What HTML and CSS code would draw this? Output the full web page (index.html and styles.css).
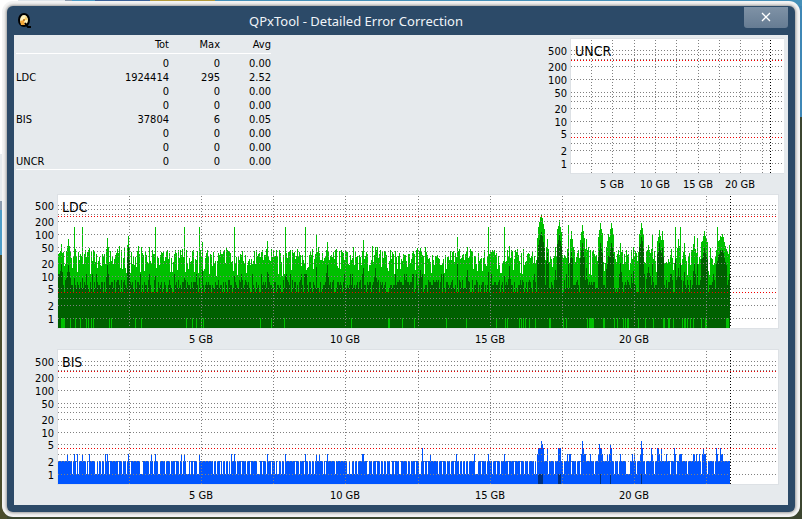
FILE: index.html
```html
<!DOCTYPE html>
<html lang="en">
<head>
    <meta charset="UTF-8">
    <meta name="viewport" content="width=device-width, initial-scale=1.0">
    <title>QPxTool - Detailed Error Correction</title>
    <link rel="stylesheet" href="styles.css">
</head>
<body>
    <div class="window">
        <header class="titlebar">
            <svg class="app-icon" viewBox="0 0 16 16" aria-hidden="true">
                <ellipse cx="7" cy="7" rx="5" ry="6" fill="#fff0b8" stroke="#000" stroke-width="2"/>
                <path d="M7 7L3 8L4 12L8 12Z" fill="#f5a838"/>
                <path d="M7 7L9 3L11 7Z" fill="#f9cf6a"/>
                <circle cx="7" cy="7" r="1" fill="#b06a20"/>
                <path d="M8 10L11 14H14" fill="none" stroke="#000" stroke-width="2"/>
            </svg>
            <h1>QPxTool - Detailed Error Correction</h1>
            <button type="button" class="close-btn" aria-label="Close">
                <svg viewBox="0 0 10 10" width="10" height="10"><path d="M1 1L9 9M9 1L1 9" stroke="#fff" stroke-width="1.3"/></svg>
            </button>
        </header>
        <main class="content">
            <div class="summary">
                <table>
                    <thead>
                        <tr><th class="name"></th><th>Tot</th><th>Max</th><th>Avg</th></tr>
                    </thead>
                    <tbody>
                        <tr><td></td><td>0</td><td>0</td><td>0.00</td></tr>
                        <tr><td>LDC</td><td>1924414</td><td>295</td><td>2.52</td></tr>
                        <tr><td></td><td>0</td><td>0</td><td>0.00</td></tr>
                        <tr><td></td><td>0</td><td>0</td><td>0.00</td></tr>
                        <tr><td>BIS</td><td>37804</td><td>6</td><td>0.05</td></tr>
                        <tr><td></td><td>0</td><td>0</td><td>0.00</td></tr>
                        <tr><td></td><td>0</td><td>0</td><td>0.00</td></tr>
                        <tr><td>UNCR</td><td>0</td><td>0</td><td>0.00</td></tr>
                    </tbody>
                </table>
                <svg class="chart small" id="uncr"></svg>
            </div>
            <svg class="chart" id="ldc"></svg>
            <svg class="chart" id="bis"></svg>
        </main>
    </div>
    <script src="charts.js"></script>
</body>
</html>
```
FILE: styles.css
```css
* {
    box-sizing: border-box;
}
body {
    margin: 0;
    padding: 6px 7px 7px;
    min-height: 100vh;
    font-family: "DejaVu Sans Condensed", Tahoma, sans-serif;
    font-size: 11px;
    color: #000;
    background: linear-gradient(90deg, #fff 18px, #dfe5ea 18px 65px, #8b9bae 65px 72px, #4d9cc6 72px 95px, #3a5f97 95px 150px, #b29a3c 150px 215px, #4590b8 215px) top / 100% 6px no-repeat,
        linear-gradient(#fff 154px, #e7ebee 154px 201px, #8b9bae 201px 210px, #4d9cc6 210px 255px, #4b4d2c 255px) left / 7px 100% no-repeat,
        linear-gradient(#3f87b5 117px, #3c4630 117px);
}
.window {
    background: #2c4a68;
    border-radius: 6px;
    padding: 0 7px 7px;
    box-shadow: 0 0 3px 1px #999, 0 0 0 5px #f4f4f4;
}
.titlebar {
    display: grid;
    grid-template-columns: 44px 1fr 134px;
    height: 29px;
}
.titlebar h1 {
    margin: 0;
    text-align: center;
    font: 13px/30px "Noto Sans", sans-serif;
    color: #f0f4f8;
}
.app-icon {
    width: 16px;
    height: 16px;
    margin: 7px 3px;
}
.close-btn {
    width: 44px;
    height: 21px;
    margin-top: 1px;
    padding: 0;
    border: 0;
    border-radius: 0 0 3px 3px;
    background: linear-gradient(#7f92a6, #667c93);
    justify-self: end;
}
.content {
    background: #e6eaed;
    padding: 3px 4px 1px 2px;
}
.summary {
    display: flex;
    justify-content: space-between;
    align-items: flex-start;
    height: 156px;
}
table {
    width: 255px;
    table-layout: fixed;
    border-collapse: collapse;
    border-bottom: 1px solid #fff;
}
th, td {
    padding: 0;
    height: 14px;
    line-height: 14px;
    font-weight: normal;
    text-align: right;
}
th {
    width: 51px;
}
th.name {
    width: 102px;
}
thead {
    border-bottom: 1px solid #fff;
}
thead th {
    height: 15px;
}
tbody tr:first-child td {
    height: 17px;
    padding-top: 3px;
}
tbody tr:last-child td {
    height: 15px;
}
td:first-child {
    text-align: left;
}
.chart {
    display: block;
    width: 100%;
    height: 155px;
}
.chart.small {
    width: 240px;
}
.chart text {
    fill: #000;
}
.chart .tick-y {
    text-anchor: end;
}
.chart .tick-x {
    text-anchor: middle;
}
.chart .caption {
    font-size: 14px;
}
.plot {
    fill: #fff;
    stroke: #dde1e5;
}
.grid {
    stroke: #808080;
    stroke-dasharray: 1 2;
    shape-rendering: crispEdges;
}
.grid.limit {
    stroke: #f00000;
}
.grid.end {
    stroke: #000;
}
```
FILE: charts.js
```js
const LEVELS = [500, 400, 300, 200, 100, 50, 40, 30, 20, 10, 5, 3, 2, 1];
const LABELS = [500, 200, 100, 50, 20, 10, 5, 2, 1];
const DISC_GB = 24.93;
const END_GB = 23.3;
const SAMPLES = 672;

// small repeatable noise source
let seed = 7;
function rnd() {
    seed = (seed * 1103515245 + 12345) % 2147483648;
    return seed / 2147483648;
}

// distance of a value above the bottom of the plot
function rise(v) {
    return Math.round(10.3 + 41.9 * Math.log10(v));
}

// [sample, max, average, half width]
const LDC_PEAKS = [
    [3, 58, 20, 1], [10, 75, 18, 2], [16, 150, 9, 0], [24, 150, 9, 0], [49, 80, 18, 1], [70, 90, 48, 1],
    [97, 150, 10, 0], [126, 150, 9, 0], [141, 150, 9, 0], [144, 65, 14, 0], [176, 150, 10, 0],
    [209, 68, 12, 0], [227, 150, 10, 0], [247, 150, 10, 0], [258, 95, 16, 0], [269, 65, 18, 1],
    [305, 72, 15, 0], [317, 50, 15, 1], [362, 45, 14, 1], [399, 85, 20, 0], [409, 50, 14, 1],
    [430, 150, 12, 0], [446, 150, 10, 0], [451, 52, 17, 1],
    [480, 150, 55, 1], [483, 295, 110, 3], [489, 77, 35, 1], [497, 50, 14, 1], [501, 210, 95, 2],
    [510, 160, 35, 0], [513, 115, 40, 1], [524, 165, 60, 2], [528, 75, 15, 1], [542, 185, 62, 2], [550, 100, 30, 2],
    [553, 185, 60, 2], [562, 60, 20, 1], [575, 50, 13, 1], [583, 180, 85, 2], [590, 55, 16, 2],
    [594, 100, 20, 0], [601, 125, 60, 2], [604, 115, 45, 1], [617, 150, 25, 0], [620, 77, 15, 1],
    [622, 150, 20, 0], [626, 60, 12, 1], [636, 88, 20, 1], [639, 80, 20, 0], [646, 115, 45, 3],
    [659, 150, 22, 0], [662, 90, 42, 4], [664, 100, 42, 4], [671, 55, 11, 1]
];

function ldcData() {
    const max = [];
    const avg = [];
    for (let i = 0; i < SAMPLES; i++) {
        let top = 18 + rnd() * 25 + (rnd() > 0.88 ? 9 : 0);
        if (rnd() < 0.16) {
            top = 10 + rnd() * 9;
        }
        max.push(top);
        avg.push([4, 4, 5, 5, 6, 6, 6, 7, 7, 8, 11][Math.floor(rnd() * 11)]);
    }
    for (const [at, m, a, w] of LDC_PEAKS) {
        for (let i = at - w; i <= at + w; i++) {
            if (i < 0 || i >= SAMPLES) continue;
            const f = Math.pow(0.35 + rnd() * 0.2, Math.abs(i - at) / (w + 0.5));
            max[i] = Math.max(max[i], m * f);
            avg[i] = Math.max(avg[i], a * f);
        }
    }
    return { max, avg };
}
const LDC_ZERO = [3, 4, 5, 6, 12, 17, 22, 28, 30, 33, 35, 51, 53, 77, 83, 128, 134, 138, 143, 145, 202, 213, 226, 293, 330, 331,
    344, 356, 388, 408, 438, 447, 449, 461, 463, 465, 467, 471, 477, 491, 492, 505, 508, 529, 531, 532, 533, 534, 535,
    545, 546, 556, 559, 565, 567, 569, 570, 580, 587, 595, 605, 606, 610, 611, 615, 624, 626, 627, 629, 632, 635, 643,
    647, 648, 668, 669, 670];

// samples where the BIS level falls back to 1
const BIS_LOW = [14, 18, 20, 28, 30, 37, 38, 40, 43, 46, 51, 60, 64, 68, 72, 82, 83, 84, 91, 95, 100, 101, 107, 112, 117, 121,
    124, 128, 129, 130, 132, 135, 139, 140, 155, 158, 162, 164, 167, 170, 172, 178, 183, 188, 192, 199, 200, 201, 204,
    208, 213, 217, 219, 220, 223, 226, 237, 241, 246, 250, 253, 256, 265, 267, 277, 289, 290, 292, 293, 296, 299, 309,
    310, 314, 318, 322, 325, 328, 332, 333, 336, 341, 342, 349, 352, 357, 361, 362, 366, 369, 380, 384, 388, 392,
    396, 398, 401, 404, 407, 410, 416, 417, 418, 419, 423, 428, 430, 434, 438, 442, 450, 456, 462, 466, 470,
    476, 478, 490, 496, 505, 512, 513, 518, 522, 532, 536, 540, 549, 556, 560,
    568, 569, 570, 571, 578, 584, 587, 596, 599, 608, 612, 618, 629, 636, 643, 649, 656];
const BIS_PEAKS = [
    [9, 3], [16, 3], [19, 3], [24, 3], [31, 3], [47, 3], [49, 3], [70, 3], [93, 3], [97, 3], [123, 3], [126, 3], [141, 3],
    [173, 3], [176, 3], [209, 3], [227, 3], [247, 3], [258, 3], [261, 3], [269, 3], [304, 3], [305, 3], [364, 4],
    [372, 3], [398, 3], [416, 3], [430, 3], [446, 3], [479, 3], [480, 4], [481, 4], [482, 4], [483, 6], [484, 5],
    [485, 4], [489, 4], [500, 4], [501, 4], [502, 4], [509, 3], [511, 3], [512, 3], [523, 3], [524, 6], [525, 4],
    [526, 3], [527, 3], [532, 3], [540, 3], [541, 5], [542, 4], [543, 4], [544, 3], [549, 3], [551, 3], [552, 5],
    [553, 4], [562, 3], [574, 3], [576, 3], [582, 3], [583, 6], [584, 4], [593, 4], [594, 3], [599, 4], [600, 4],
    [601, 3], [603, 4], [608, 3], [616, 4], [617, 3], [621, 3], [622, 3], [623, 3], [635, 3], [636, 3], [638, 3],
    [641, 3], [644, 3], [645, 4], [646, 3], [647, 3], [658, 4], [659, 3], [662, 4], [663, 3], [664, 3]
];
const BIS_DARK = [480, 481, 482, 483, 484, 500, 501, 502, 542, 552, 583];

function bars(values, left, bottom, color) {
    let d = "";
    values.forEach((v, i) => {
        if (v) {
            d += `M${left + i} ${bottom}V${bottom - rise(v)}h1V${bottom}z`;
        }
    });
    return `<path fill="${color}" shape-rendering="crispEdges" d="${d}"/>`;
}

function pick(list, value) {
    const out = new Array(SAMPLES).fill(0);
    list.forEach((i) => { out[i] = value; });
    return out;
}

function draw(id, left, right, height, fill) {
    const svg = document.getElementById(id);
    const end = svg.clientWidth - right;
    const width = end - left;
    const yOf = (v) => height - rise(v);
    const xOf = (gb) => left + Math.floor(gb * width / DISC_GB);
    let out = `<rect class="plot" x="${left - 0.5}" y="0.5" width="${width + 1}" height="${height + 1}"/>`;
    out += '<g transform="translate(0 1)">' + fill(left, height);

    const hline = (y, cls) => `<path class="grid ${cls}" d="M${left} ${y + 0.5}H${end - 2}"/>`;
    const vline = (x, cls) => `<path class="grid ${cls}" d="M${x + 0.5} 1V${height}"/>`;
    LEVELS.forEach((v) => { out += hline(yOf(v), ""); });
    out += hline(21, "limit") + hline(yOf(4), "limit");
    for (let gb = 2.5; gb < DISC_GB; gb += 2.5) {
        out += vline(xOf(gb) - 1, "");
    }
    out += vline(xOf(END_GB), "end");

    LABELS.forEach((v) => { out += `<text class="tick-y" x="${left - 4}" y="${yOf(v) + 5}">${v}</text>`; });
    for (let gb = 5; gb < DISC_GB; gb += 5) {
        out += `<text class="tick-x" x="${xOf(gb) - 1}" y="${height + 15}">${gb} GB</text>`;
    }
    out += `<text class="caption" x="${left + 4}" y="17">${id.toUpperCase()}</text></g>`;
    svg.innerHTML = out;
}

const ldc = ldcData();
const bis = pick([], 0).fill(2);
BIS_LOW.forEach((i) => { bis[i] = 1; });
BIS_PEAKS.forEach(([i, v]) => { bis[i] = v; });

function drawAll() {
    draw("uncr", 27, 0, 134, () => "");
    draw("ldc", 42, 6, 133, (x, h) => bars(ldc.max, x, h, "#00c000") + bars(ldc.avg, x, h, "#006000") + bars(pick(LDC_ZERO, 1), x, h, "#00c000"));
    draw("bis", 42, 6, 134, (x, h) => bars(bis, x, h, "#0055ff") + bars(pick(BIS_DARK, 1), x, h, "#003080"));
}
drawAll();
window.addEventListener("resize", drawAll);
```
